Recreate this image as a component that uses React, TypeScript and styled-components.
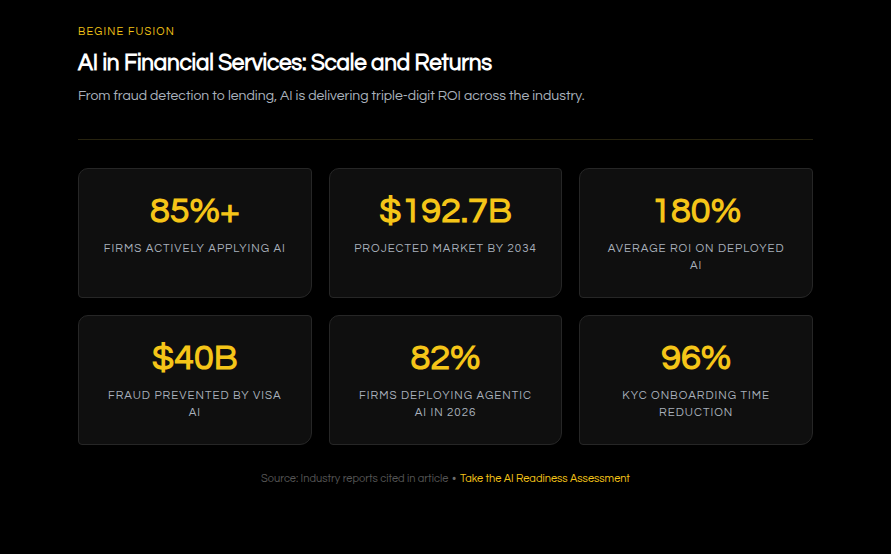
import React from 'react'
import styled, { createGlobalStyle } from 'styled-components'

const GlobalStyle = createGlobalStyle`
  * { box-sizing: border-box; }
  html, body {
    margin: 0;
    padding: 0;
    background: #000;
  }
  body {
    font-family: "Questrial", "Inter", "Liberation Sans", sans-serif;
    color: #fff;
  }
`

const stats = [
  { value: '85%+', label: 'Firms actively applying AI' },
  { value: '$192.7B', label: 'Projected market by 2034' },
  { value: '180%', label: 'Average ROI on deployed AI' },
  { value: '$40B', label: 'Fraud prevented by Visa AI' },
  { value: '82%', label: 'Firms deploying agentic AI in 2026' },
  { value: '96%', label: 'KYC onboarding time reduction' },
]

const App = () => {
  return (
    <>
      <GlobalStyle />
      <Page>
        <Container>
          <Eyebrow>Begine Fusion</Eyebrow>
          <Title>AI in Financial Services: Scale and Returns</Title>
          <Subtitle>
            From fraud detection to lending, AI is delivering triple-digit ROI across the industry.
          </Subtitle>
          <Divider />
          <Grid>
            {stats.map((s) => (
              <Card key={s.value}>
                <Value>{s.value}</Value>
                <Label>{s.label}</Label>
              </Card>
            ))}
          </Grid>
          <Footer>
            <Muted>Source: Industry reports cited in article</Muted>
            <Dot>•</Dot>
            <Link href="#">Take the AI Readiness Assessment</Link>
          </Footer>
        </Container>
      </Page>
    </>
  )
}

export default App

const Page = styled.div`
  width: 100%;
  min-height: 554px;
  background: #000;
  padding-top: 24px;
`

const Container = styled.div`
  width: 735px;
  margin: 0 auto;
  display: flex;
  flex-direction: column;
`

const Eyebrow = styled.div`
  font-size: 11px;
  line-height: 16px;
  letter-spacing: 1.2px;
  text-transform: uppercase;
  color: #f2c417;
`

const Title = styled.h1`
  margin: 9px 0 0;
  font-size: 22.5px;
  line-height: 30px;
  font-weight: 700;
  letter-spacing: -0.2px;
  color: #fff;
`

const Subtitle = styled.p`
  margin: 7px 0 0;
  font-size: 14px;
  line-height: 20px;
  color: #a9b1bc;
`

const Divider = styled.div`
  margin-top: 33px;
  height: 1px;
  background: #27230f;
`

const Grid = styled.div`
  margin-top: 28px;
  display: grid;
  grid-template-columns: repeat(3, 1fr);
  grid-auto-rows: 130px;
  gap: 17px;
`

const Card = styled.div`
  background: #0f0f0f;
  border: 1px solid #262626;
  border-radius: 10px 4px 12px 4px;
  padding: 22px 20px 0;
  display: flex;
  flex-direction: column;
  align-items: center;
  text-align: center;
`

const Value = styled.div`
  font-size: 36px;
  line-height: 40px;
  font-weight: 700;
  color: #f5c518;
`

const Label = styled.div`
  margin-top: 9px;
  max-width: 184px;
  font-size: 11.5px;
  line-height: 17px;
  letter-spacing: 1px;
  text-transform: uppercase;
  color: #a9b1bc;
`

const Footer = styled.div`
  margin-top: 26px;
  display: flex;
  justify-content: center;
  align-items: center;
  gap: 4px;
  font-size: 11px;
  line-height: 16px;
`

const Muted = styled.span`
  color: #555;
`

const Dot = styled.span`
  color: #6b6b6b;
`

const Link = styled.a`
  color: #f5c518;
  text-decoration: none;
`
